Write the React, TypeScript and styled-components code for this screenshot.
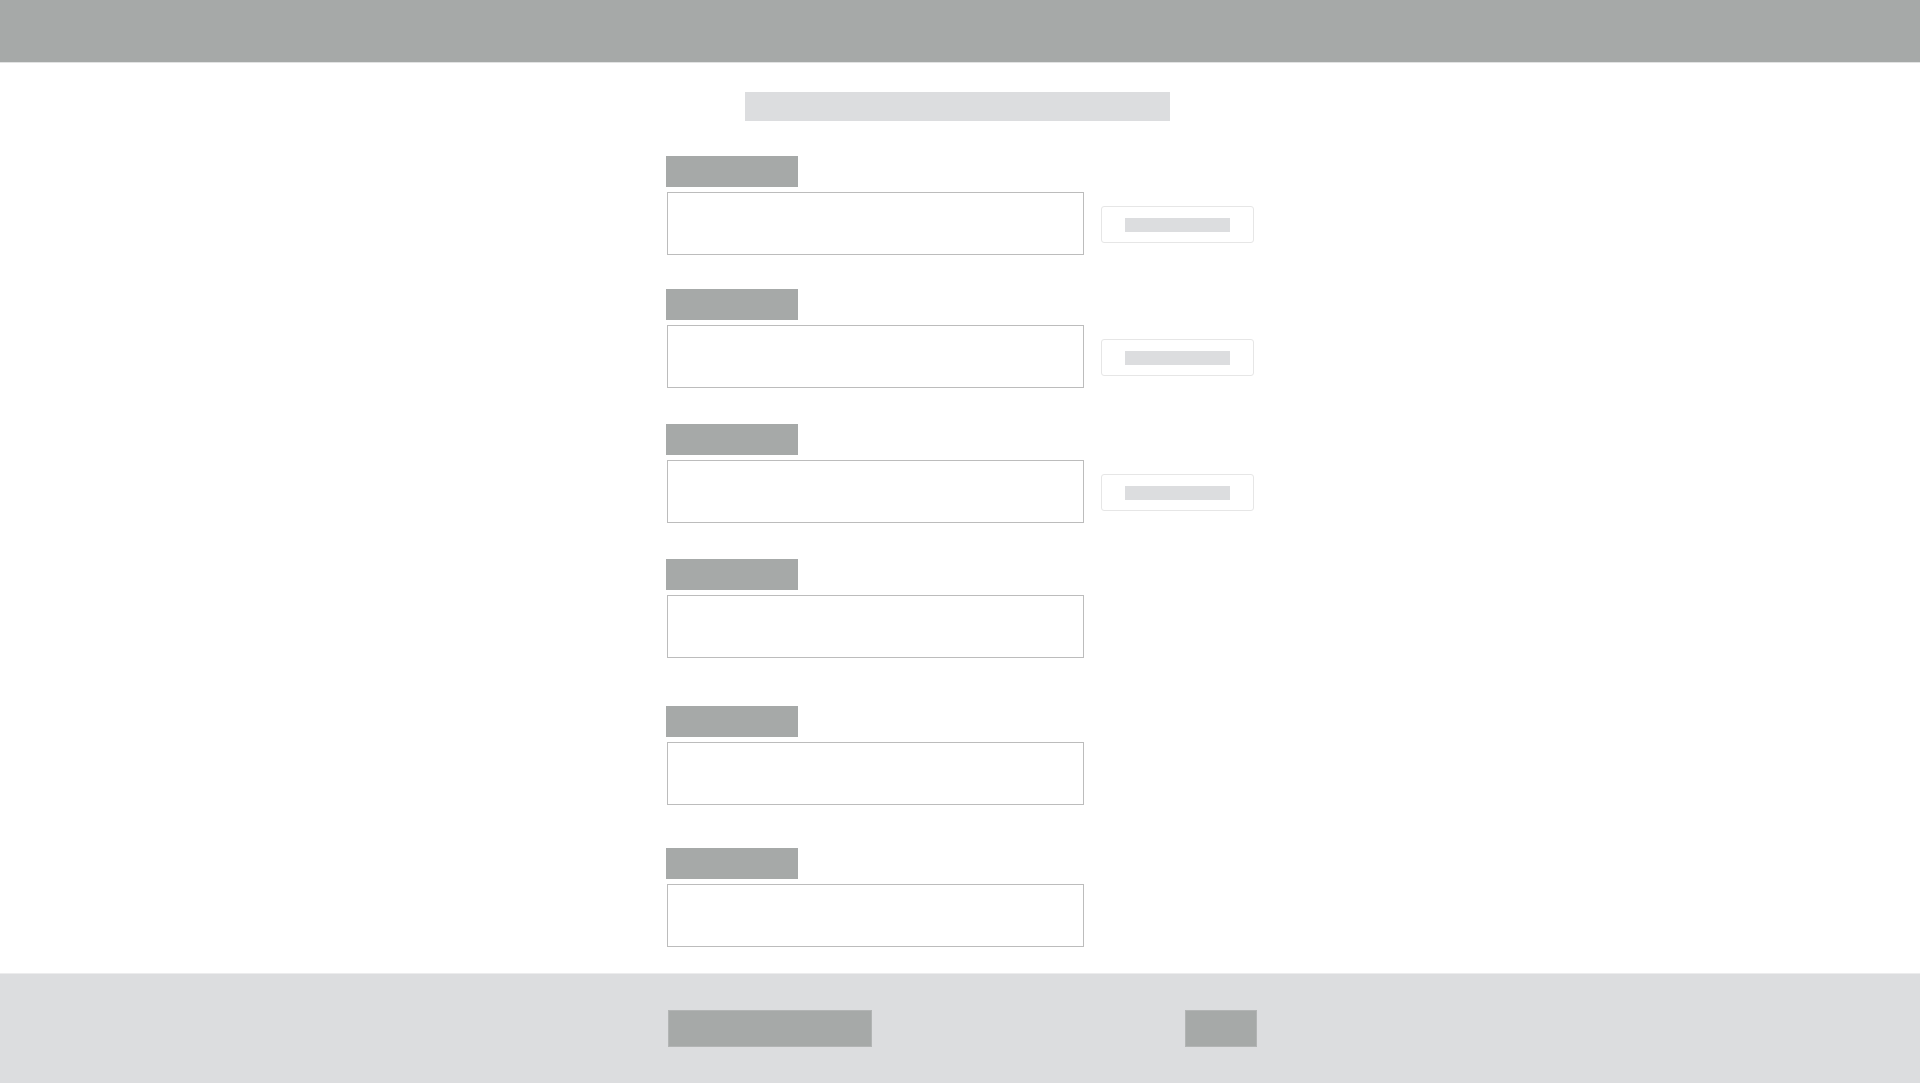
import React from "react";
import styled, { createGlobalStyle } from "styled-components";

const Global = createGlobalStyle`
  html, body { margin: 0; padding: 0; background: #ffffff; }
  body { font-family: "Liberation Sans", Arial, sans-serif; }
  * { box-sizing: border-box; }
`;

const Page = styled.div`
  display: flex;
  flex-direction: column;
  min-height: 1083px;
  height: 1083px;
`;

const Header = styled.header`
  height: 63px;
  flex: none;
  background: #a6a9a8;
  border-bottom: 1px solid #e2e3e3;
`;

const Main = styled.main`
  flex: 1;
  padding: 29px 0 0 666px;
  overflow: hidden;
`;

const Column = styled.div`
  width: 592px;
  display: flex;
  flex-direction: column;
`;

const Title = styled.div`
  width: 425px;
  height: 29px;
  margin-left: 79px;
  background: #dcdddf;
`;

const Field = styled.div<{ $top: number }>`
  display: flex;
  flex-direction: column;
  gap: 5px;
  margin-top: ${(p) => p.$top}px;
`;

const Label = styled.div`
  width: 132px;
  height: 31px;
  background: #a6a9a8;
`;

const Row = styled.div`
  display: flex;
  align-items: center;
  gap: 17px;
  padding-left: 1px;
`;

const Input = styled.div`
  width: 417px;
  height: 63px;
  border: 1px solid #bcbcbc;
  background: #fff;
`;

const SideButton = styled.div`
  width: 153px;
  height: 37px;
  border: 1px solid #e6e6e6;
  border-radius: 3px;
  background: #fff;
  display: flex;
  align-items: center;
  justify-content: center;
  margin-top: 2px;
`;

const ButtonText = styled.div`
  width: 105px;
  height: 14px;
  background: #dcdddf;
`;

const Footer = styled.footer`
  height: 110px;
  flex: none;
  background: #dcdddf;
  border-top: 1px solid #ececed;
  display: flex;
  align-items: flex-start;
  padding: 36px 0 0 668px;
`;

const FooterButton = styled.div<{ $w: number; $ml?: number }>`
  width: ${(p) => p.$w}px;
  height: 37px;
  margin-left: ${(p) => p.$ml ?? 0}px;
  background: #a6a9a8;
  border: 1px solid #b2b4b4;
`;

const fields = [
  { top: 35, button: true },
  { top: 34, button: true },
  { top: 36, button: true },
  { top: 36, button: false },
  { top: 48, button: false },
  { top: 43, button: false },
];

export default function App() {
  return (
    <Page>
      <Global />
      <Header />
      <Main>
        <Column>
          <Title />
          {fields.map((f, i) => (
            <Field key={i} $top={f.top}>
              <Label />
              <Row>
                <Input />
                {f.button && (
                  <SideButton>
                    <ButtonText />
                  </SideButton>
                )}
              </Row>
            </Field>
          ))}
        </Column>
      </Main>
      <Footer>
        <FooterButton $w={204} />
        <FooterButton $w={72} $ml={313} />
      </Footer>
    </Page>
  );
}
